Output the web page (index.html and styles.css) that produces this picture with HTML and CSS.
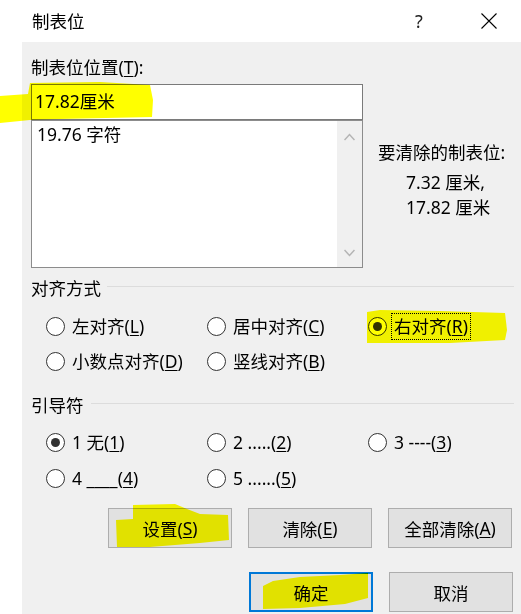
FILE: index.html
```html
<!DOCTYPE html>
<html lang="zh-CN">
<head>
<meta charset="utf-8">
<title>制表位</title>
<link rel="stylesheet" href="styles.css">
</head>
<body>
<div class="dialog">
  <div class="titlebar">
    <span class="title">制表位</span>
    <span class="help">?</span>
    <svg class="close" width="16" height="16" viewBox="0 0 16 16"><path d="M0.5 0.5 L15.5 15.5 M15.5 0.5 L0.5 15.5" stroke="#000" stroke-width="1.1" fill="none"/></svg>
  </div>
  <div class="panel">
    <div class="label">制表位位置(<u>T</u>):</div>
    <div class="tabarea">
      <div class="tabcol">
        <div class="input">17.82厘米</div>
        <div class="list">
          <div class="list-items"><div class="item">19.76 字符</div></div>
          <div class="scrollbar">
            <svg width="11" height="8" viewBox="0 0 11 8"><polyline points="0.5,7 5.5,1.5 10.5,7" fill="none" stroke="#b4b4b4" stroke-width="1.5"/></svg>
            <svg width="11" height="8" viewBox="0 0 11 8"><polyline points="0.5,1 5.5,6.5 10.5,1" fill="none" stroke="#b4b4b4" stroke-width="1.5"/></svg>
          </div>
        </div>
      </div>
      <div class="clear-info">
        <div class="clear-title">要清除的制表位:</div>
        <div class="clear-values">7.32 厘米,<br>17.82 厘米</div>
      </div>
    </div>

    <div class="group-header first"><span>对齐方式</span><span class="rule"></span></div>
    <div class="radio-grid align">
      <div class="radio"><span class="circle"></span><span class="rlabel">左对齐(<u>L</u>)</span></div>
      <div class="radio"><span class="circle"></span><span class="rlabel">居中对齐(<u>C</u>)</span></div>
      <div class="radio"><span class="circle checked"></span><span class="rlabel focus">右对齐(<u>R</u>)</span></div>
      <div class="radio"><span class="circle"></span><span class="rlabel">小数点对齐(<u>D</u>)</span></div>
      <div class="radio"><span class="circle"></span><span class="rlabel">竖线对齐(<u>B</u>)</span></div>
    </div>

    <div class="group-header second"><span>引导符</span><span class="rule"></span></div>
    <div class="radio-grid leader">
      <div class="radio"><span class="circle checked"></span><span class="rlabel">1 无(<u>1</u>)</span></div>
      <div class="radio"><span class="circle"></span><span class="rlabel">2 .....(<u>2</u>)</span></div>
      <div class="radio"><span class="circle"></span><span class="rlabel">3 ----(<u>3</u>)</span></div>
      <div class="radio"><span class="circle"></span><span class="rlabel">4 ____(<u>4</u>)</span></div>
      <div class="radio"><span class="circle"></span><span class="rlabel">5 ......(<u>5</u>)</span></div>
    </div>

    <div class="btn-row row1">
      <div class="btn">设置(<u>S</u>)</div>
      <div class="btn">清除(<u>E</u>)</div>
      <div class="btn">全部清除(<u>A</u>)</div>
    </div>
    <div class="btn-row row2">
      <div class="btn default">确定</div>
      <div class="btn">取消</div>
    </div>
  </div>
</div>
<svg class="marker" width="521" height="614" viewBox="0 0 521 614">
  <polygon points="0,96 28,94 30,83 100,82 150,85 153,100 152,117 60,119 30,120 0,123" />
  <polygon points="367,312 380,310 440,311 505,313 507,330 505,340 450,343 367,343" />
  <polygon points="133,505 175,504 187,509 200,514 228,515 229,540 200,543 150,547 117,547 116,520 133,519" />
  <polygon points="273,581 300,577 340,575 368,573 368,598 345,604 300,608 263,609 263,586" />
</svg>
</body>
</html>
```

FILE: styles.css
```css
html, body {
  margin: 0;
  padding: 0;
  background: #ffffff;
}

body {
  position: relative;
  width: 521px;
  height: 614px;
  overflow: hidden;
  font-family: "Noto Sans", "Noto Sans CJK SC", sans-serif;
  font-size: 17.5px;
  color: #000;
}

u {
  text-decoration: underline;
  text-underline-offset: 2px;
  text-decoration-thickness: 1px;
}

.titlebar {
  height: 42px;
  display: flex;
  align-items: center;
  padding-left: 32px;
}

.title {
  flex: 1;
  font-size: 17.5px;
  line-height: 40px;
}

.help {
  width: 10px;
  text-align: center;
  font-size: 18px;
  color: #222;
  margin-right: 57px;
  line-height: 40px;
}

.close {
  margin-right: 24px;
}

.panel {
  margin-left: 22px;
  background: #f0f0f0;
  height: 572px;
  box-sizing: border-box;
  padding: 13px 7px 0 9px;
}

.label {
  line-height: 24px;
}

.tabarea {
  display: flex;
  margin-top: 5px;
}

.tabcol {
  width: 332px;
  flex: none;
}

.input {
  height: 36px;
  box-sizing: border-box;
  border: 1px solid #7a7a7a;
  background: #fff;
  padding: 1px 0 0 3px;
  line-height: 30px;
}

.list {
  height: 148px;
  box-sizing: border-box;
  border: 1px solid #8c8c8c;
  background: #fff;
  display: flex;
}

.list-items {
  flex: 1;
  padding: 1px 5px;
}

.item {
  line-height: 24px;
}

.scrollbar {
  width: 25px;
  background: #f0f0f0;
  display: flex;
  flex-direction: column;
  align-items: center;
  justify-content: space-between;
  padding: 12px 0 10px;
}

.clear-info {
  flex: 1;
  padding-top: 56px;
  line-height: 25px;
}

.clear-title {
  padding-left: 15px;
  margin-bottom: 5px;
}

.clear-values {
  padding-left: 43px;
}

.group-header {
  display: flex;
  align-items: center;
  gap: 6px;
  line-height: 24px;
}

.group-header.first {
  margin-top: 8px;
}

.group-header.second {
  margin-top: 14px;
  gap: 7px;
}

.rule {
  flex: 1;
  height: 1px;
  background: #dcdcdc;
  margin-bottom: 4px;
}

.radio-grid {
  display: grid;
  grid-template-columns: 161px 161px 1fr;
  padding-left: 15px;
}

.radio-grid.align {
  margin-top: 9px;
  grid-auto-rows: 35px;
}

.radio-grid.leader {
  margin-top: 7px;
  grid-auto-rows: 36px;
}

.radio {
  display: flex;
  align-items: center;
  gap: 7px;
}

.circle {
  width: 19px;
  height: 19px;
  box-sizing: border-box;
  border: 1.5px solid #333;
  border-radius: 50%;
  background: #fff;
  display: flex;
  align-items: center;
  justify-content: center;
  flex: none;
}

.circle.checked::after {
  content: "";
  width: 9px;
  height: 9px;
  border-radius: 50%;
  background: #333;
}

.rlabel {
  line-height: 25px;
}

.rlabel.focus {
  border: 1px dotted #000;
  padding: 0 2px;
  margin-left: -3px;
}

.btn-row {
  display: flex;
  justify-content: flex-end;
  gap: 16px;
}

.btn-row.row1 {
  margin-top: 12px;
  margin-right: 2px;
}

.btn-row.row2 {
  margin-top: 24px;
  margin-right: 1px;
}

.btn {
  width: 124px;
  height: 40px;
  box-sizing: border-box;
  border: 1px solid #adadad;
  background: #e1e1e1;
  display: flex;
  align-items: center;
  justify-content: center;
}

.btn.default {
  border: 2px solid #0078d7;
}

.marker {
  position: absolute;
  top: 0;
  left: 0;
  pointer-events: none;
  mix-blend-mode: multiply;
}

.marker polygon {
  fill: #ffff00;
}
```
